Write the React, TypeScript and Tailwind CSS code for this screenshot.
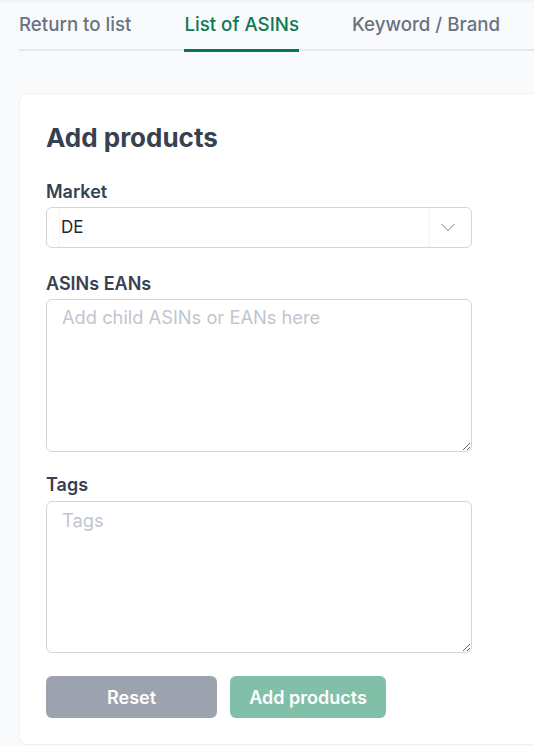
import React from 'react';

const tabs = [
  { label: 'Return to list', active: false },
  { label: 'List of ASINs', active: true },
  { label: 'Keyword / Brand', active: false },
];

const Label: React.FC<{ children: React.ReactNode }> = ({ children }) => (
  <div className="text-[18px] leading-[27px] font-semibold text-[#374151]">{children}</div>
);

const App: React.FC = () => {
  return (
    <div
      className="w-[534px] h-[746px] overflow-hidden bg-[#f9fafb] shadow-[inset_0_2px_2px_rgba(0,0,0,0.04)]"
      style={{ fontFamily: 'Inter, "Noto Sans", sans-serif' }}
    >
      {/* tabs */}
      <div className="pl-[19px] pt-[11px]">
        <div className="flex items-start gap-[53px] border-b-2 border-[#e5e7eb] w-[540px]">
          {tabs.map((t, i) => (
            <div
              key={i}
              className={`text-[18.7px] leading-[28px] font-medium pb-[10px] ${
                t.active ? 'text-[#0b7a55] border-b-[3px] border-[#047857] -mb-[3px]' : 'text-[#6b7280]'
              }`}
            >
              {t.label}
            </div>
          ))}
        </div>
      </div>

      {/* card */}
      <div className="pl-[19px] pt-[42px]">
        <div className="w-[540px] h-[652px] bg-white rounded-[8px] border border-[#eef0f3] pl-[26px] pt-[28px]">
          <h2 className="text-[26px] leading-8 font-bold text-[#374151]">Add products</h2>

          <div className="mt-[24px]">
            <Label>Market</Label>
            <div className="mt-[2px] w-[426px] h-[41px] flex items-center border border-[#d1d5db] rounded-[6px]">
              <div className="w-[13px] h-full border-r border-[#f3f4f6]" />
              <div className="flex-1 text-[17px] text-[#1f2937] pl-px">DE</div>
              <div className="w-[42px] h-full border-l border-[#f3f4f6] flex items-center pl-[11px]">
                <svg width="14" height="9" viewBox="0 0 14 9" fill="none">
                  <path d="M0.5 0.8l6.5 7 6.5-7" stroke="#9ca3af" strokeWidth="1.1" />
                </svg>
              </div>
            </div>
          </div>

          <div className="mt-[22px]">
            <Label>ASINs EANs</Label>
            <textarea
              placeholder="Add child ASINs or EANs here"
              className="block mt-[2px] w-[426px] h-[153px] border border-[#d1d5db] rounded-[6px] px-[15px] pt-[4px] text-[18.3px] leading-[27px] placeholder:text-[#c1c6cf] outline-none resize-y"
            />
          </div>

          <div className="mt-[19px]">
            <Label>Tags</Label>
            <textarea
              placeholder="Tags"
              className="block mt-[3px] w-[426px] h-[152px] border border-[#d1d5db] rounded-[6px] px-[15px] pt-[5px] text-[18.3px] leading-[27px] placeholder:text-[#c1c6cf] outline-none resize-y"
            />
          </div>

          <div className="mt-[23px] flex gap-[13px]">
            <button className="w-[171px] h-[42px] rounded-[6px] bg-[#9ca3af] text-white text-[18px] font-semibold">
              Reset
            </button>
            <button className="w-[156px] h-[42px] rounded-[6px] bg-[#81bfa9] text-white text-[18px] font-semibold">
              Add products
            </button>
          </div>
        </div>
      </div>
    </div>
  );
};

export default App;
